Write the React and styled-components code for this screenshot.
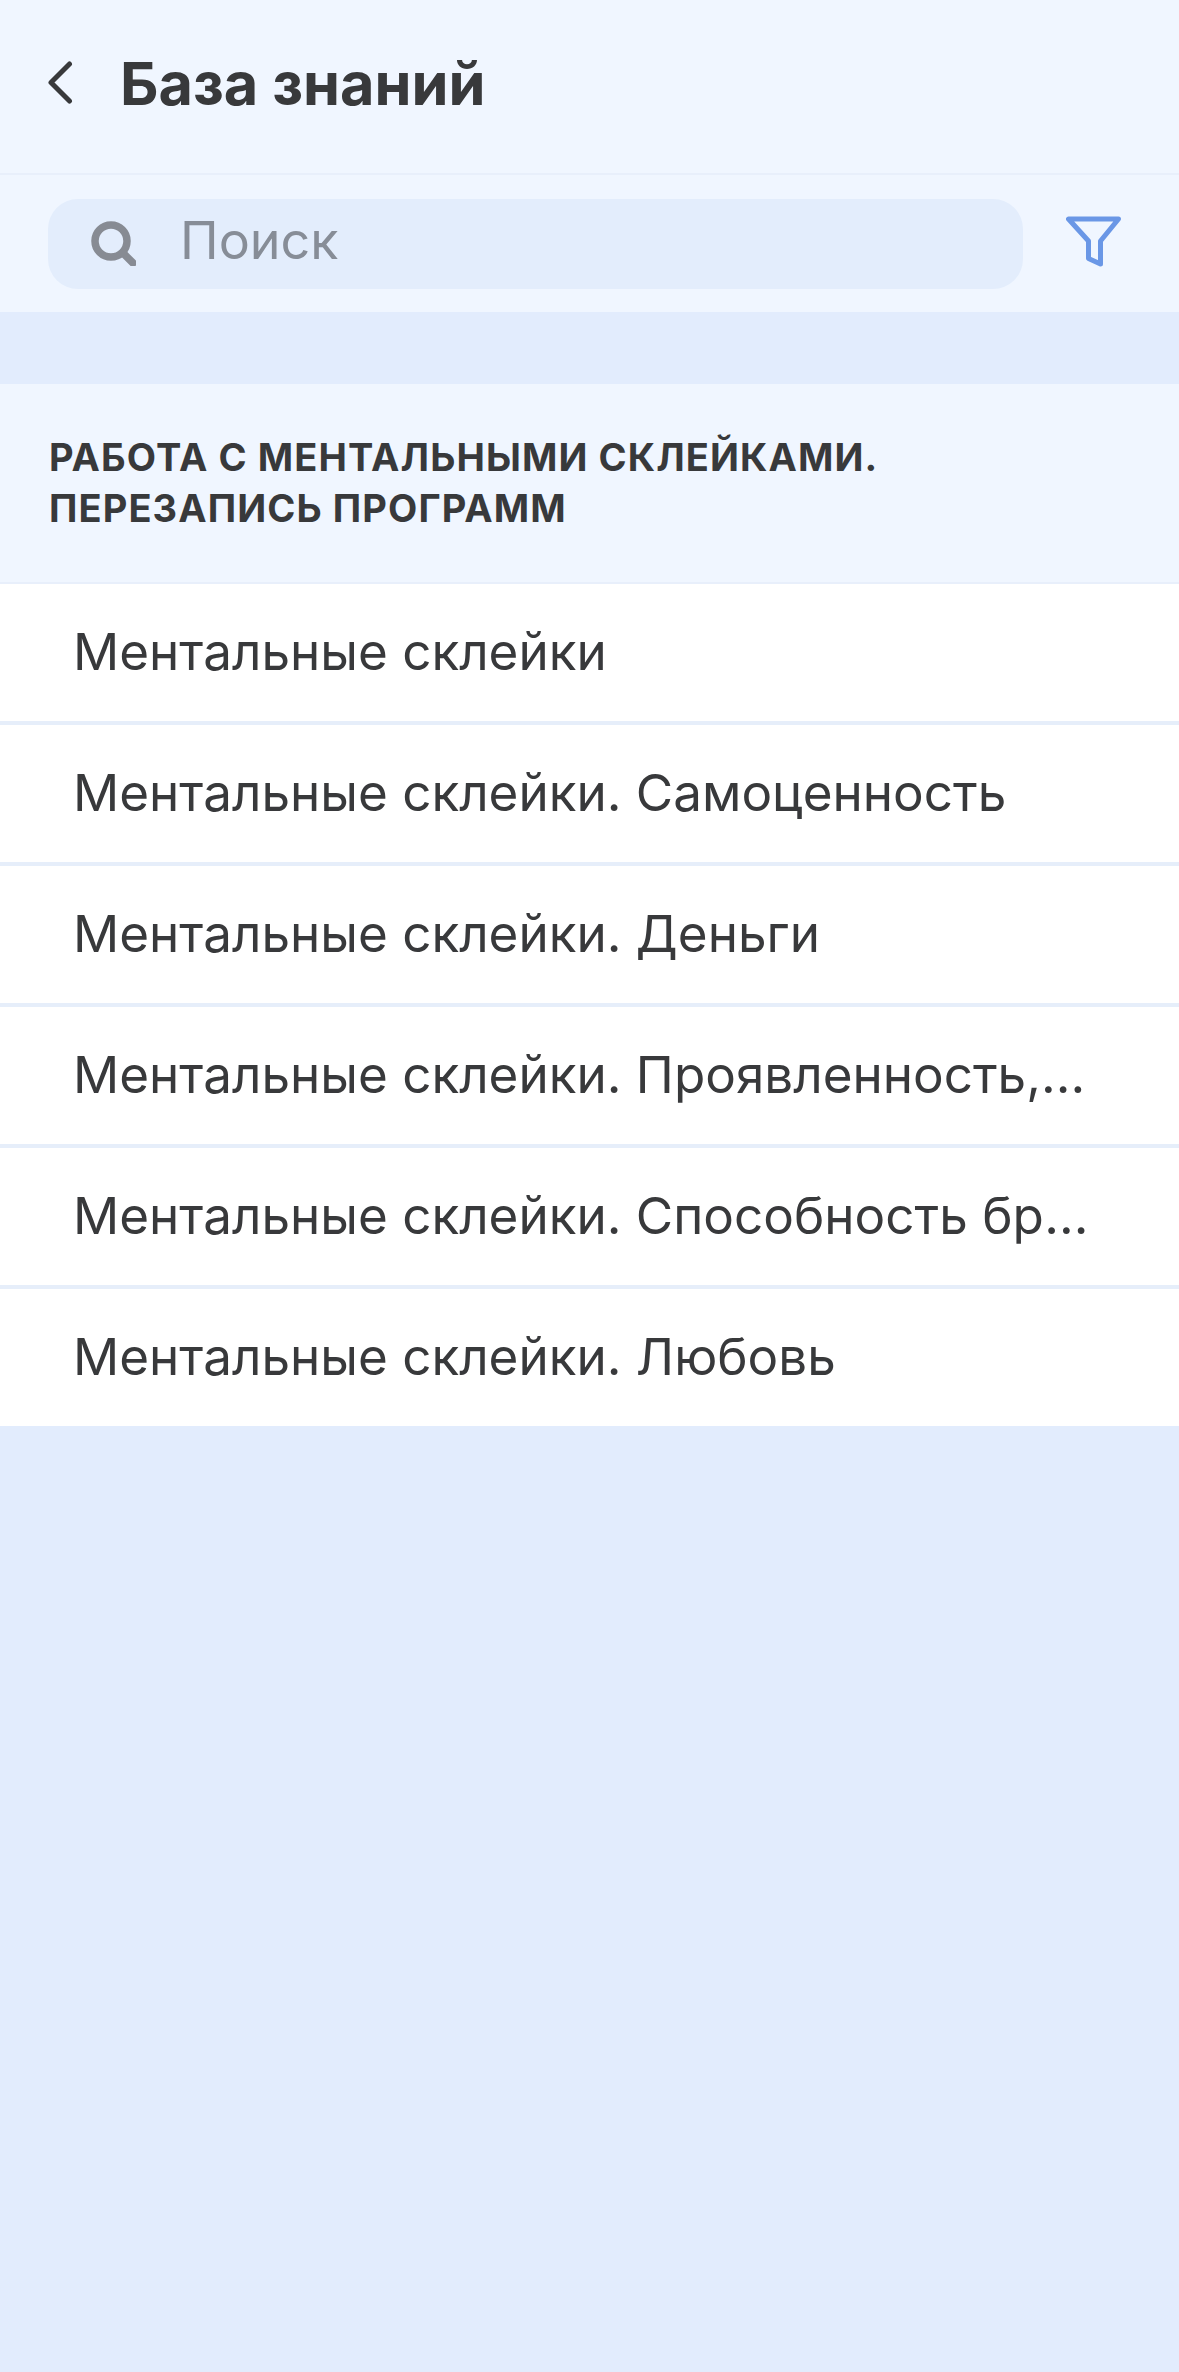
import React from 'react';
import styled, { createGlobalStyle } from 'styled-components';

const items = [
  'Ментальные склейки',
  'Ментальные склейки. Самоценность',
  'Ментальные склейки. Деньги',
  'Ментальные склейки. Проявленность, видимость',
  'Ментальные склейки. Способность брать и отдавать',
  'Ментальные склейки. Любовь',
];

function App() {
  return (
    <>
      <GlobalStyle />
      <Page>
        <Header>
          <BackIcon width="25" height="43" viewBox="0 0 25 43">
            <path d="M21.5 3 L3 21.5 L21.5 40" />
          </BackIcon>
          <Title>База знаний</Title>
        </Header>
        <SearchBar>
          <SearchField>
            <SearchIcon width="45" height="45" viewBox="0 0 45 45">
              <circle cx="20" cy="20" r="16" />
              <path d="M32 32 L42 42" />
            </SearchIcon>
            <Placeholder>Поиск</Placeholder>
          </SearchField>
          <FilterIcon width="55" height="51" viewBox="0 0 55 51">
            <path d="M2.5 3 H52.5 L34.5 25 V48 L22.5 42.5 V25 Z" />
          </FilterIcon>
        </SearchBar>
        <Section>
          <SectionTitle>
            РАБОТА С МЕНТАЛЬНЫМИ СКЛЕЙКАМИ.
            <br />
            ПЕРЕЗАПИСЬ ПРОГРАММ
          </SectionTitle>
        </Section>
        <List>
          {items.map((item) => (
            <Row key={item}>
              <RowText>{item}</RowText>
            </Row>
          ))}
        </List>
      </Page>
    </>
  );
}

const GlobalStyle = createGlobalStyle`
  html, body {
    margin: 0;
    padding: 0;
  }
  body {
    font-family: Inter, "Noto Sans", sans-serif;
    background: #e2ecfd;
  }
`;

const Page = styled.div`
  width: 1179px;
  height: 2372px;
  background: #e2ecfd;
  overflow: hidden;
`;

const Header = styled.div`
  display: flex;
  align-items: center;
  gap: 47px;
  box-sizing: border-box;
  height: 175px;
  padding: 0 0 8px 48px;
  background: #f0f6ff;
  border-bottom: 2px solid #e8effb;
`;

const BackIcon = styled.svg`
  flex-shrink: 0;
  fill: none;
  stroke: #38393b;
  stroke-width: 5;
  stroke-linecap: round;
  stroke-linejoin: round;
`;

const Title = styled.h1`
  margin: 0;
  font-size: 59.4px;
  font-weight: 700;
  line-height: 68px;
  color: #38393b;
`;

const SearchBar = styled.div`
  display: flex;
  align-items: center;
  gap: 43px;
  box-sizing: border-box;
  height: 137px;
  margin-bottom: 72px;
  padding: 0 0 0 48px;
  background: #f0f6ff;
`;

const SearchField = styled.div`
  display: flex;
  align-items: center;
  gap: 44px;
  box-sizing: border-box;
  width: 975px;
  height: 90px;
  padding-left: 43px;
  border-radius: 30px;
  background: #e3edfc;
`;

const SearchIcon = styled.svg`
  flex-shrink: 0;
  fill: none;
  stroke: #878b93;
  stroke-width: 7.5;
  stroke-linecap: round;
`;

const Placeholder = styled.span`
  padding-bottom: 6px;
  font-size: 52px;
  line-height: 60px;
  color: #878d97;
`;

const FilterIcon = styled.svg`
  flex-shrink: 0;
  margin-bottom: 4px;
  fill: none;
  stroke: #6a97e6;
  stroke-width: 5;
  stroke-linejoin: round;
`;

const Section = styled.div`
  box-sizing: border-box;
  height: 200px;
  padding: 48px 48px 0 49px;
  background: #f0f6ff;
  border-bottom: 2px solid #e8effb;
`;

const SectionTitle = styled.h2`
  margin: 0;
  font-size: 38px;
  font-weight: 700;
  letter-spacing: 1.1px;
  line-height: 51px;
  color: #38393b;
`;

const List = styled.div`
  display: flex;
  flex-direction: column;
  gap: 4px;
  background: #e6eefa;
`;

const Row = styled.div`
  display: flex;
  align-items: center;
  box-sizing: border-box;
  height: 137px;
  padding: 0 87px 3px 73px;
  background: #fff;
`;

const RowText = styled.span`
  flex: 1;
  min-width: 0;
  overflow: hidden;
  white-space: nowrap;
  text-overflow: ellipsis;
  font-size: 51.2px;
  line-height: 62px;
  color: #38393b;
`;

export default App;
